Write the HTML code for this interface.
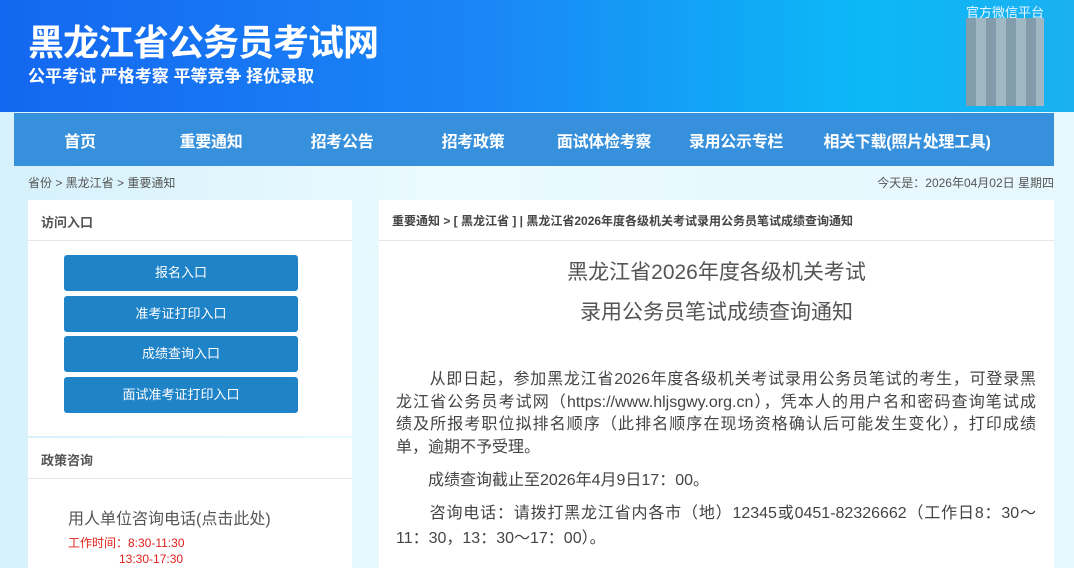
<!DOCTYPE html>
<html><head><meta charset="utf-8"><style>
*{margin:0;padding:0;box-sizing:border-box}
body{width:1074px;height:568px;overflow:hidden;background:linear-gradient(90deg,#d6f1fb,#eafaff 40%,#e6f8fe);font-family:"Liberation Sans","Noto Sans CJK SC",sans-serif;position:relative}
.hd{position:absolute;left:0;top:0;width:1074px;height:112px;background:linear-gradient(90deg,#1467f0 0%,#1a86f6 45%,#0cb8f6 80%,#1ab0f0 100%)}
.t1{position:absolute;left:28px;top:14px;color:#fff;font-size:36px;font-weight:bold;letter-spacing:-1px}
.t2{position:absolute;left:28px;top:62px;color:#fff;font-size:17px;font-weight:bold}
.qr{position:absolute;left:966px;top:18px;width:78px;height:88px;background:repeating-linear-gradient(90deg,#8f9aa4 0 10px,#b0b8bf 10px 20px);opacity:.9}
.qrt{position:absolute;left:966px;top:2px;color:#e8f4ff;font-size:13px}
.nav{position:absolute;left:14px;top:113px;width:1040px;height:53px;background:#3790dc;display:flex;align-items:center}
.nav span{color:#fff;font-size:16px;font-weight:bold;text-align:center;white-space:nowrap;letter-spacing:-0.3px}
.bc{position:absolute;top:174px;font-size:12px;color:#555}
.panel{position:absolute;background:#fff}
.ph{height:41px;border-bottom:1px solid #e6e6e6;font-size:13px;font-weight:bold;color:#555;padding:12px 0 0 13px}
.btn{position:absolute;left:36px;width:234px;height:36px;background:#1f83c8;border-radius:3px;color:#fff;font-size:13px;text-align:center;padding-top:7px}
.ct{font-size:21px;color:#555;text-align:center;position:absolute;width:100%}
.p{position:absolute;left:17px;width:640px;font-size:16px;color:#444;line-height:22.7px}
.p div{text-align:justify;text-align-last:justify}
.p div.l{text-align-last:left}
</style></head><body>
<div class="hd">
<div class="t1">黑龙江省公务员考试网</div>
<div class="t2">公平考试 严格考察 平等竞争 择优录取</div>
<div class="qrt">官方微信平台</div>
<div class="qr"></div>
</div>
<div class="nav">
<span style="width:132px">首页</span><span style="width:130px">重要通知</span><span style="width:132px">招考公告</span><span style="width:130px">招考政策</span><span style="width:132px">面试体检考察</span><span style="width:132px">录用公示专栏</span><span style="width:210px">相关下载(照片处理工具)</span>
</div>
<div class="bc" style="left:28px">省份 &gt; 黑龙江省 &gt; 重要通知</div>
<div class="bc" style="right:20px">今天是：2026年04月02日 星期四</div>

<div class="panel" style="left:28px;top:200px;width:324px;height:236px">
<div class="ph">访问入口</div>
<div class="btn" style="top:55px">报名入口</div>
<div class="btn" style="top:96px">准考证打印入口</div>
<div class="btn" style="top:136px">成绩查询入口</div>
<div class="btn" style="top:177px">面试准考证打印入口</div>
</div>
<div class="panel" style="left:28px;top:438px;width:324px;height:130px">
<div class="ph">政策咨询</div>
<div style="position:absolute;left:40px;top:67px;font-size:16px;color:#555">用人单位咨询电话(点击此处)</div>
<div style="position:absolute;left:40px;top:97px;font-size:12px;color:#e0201a;line-height:16px">工作时间：8:30-11:30<br><span style="padding-left:51px">13:30-17:30</span></div>
</div>

<div class="panel" style="left:379px;top:200px;width:675px;height:368px">
<div class="ph" style="font-size:12px;color:#444">重要通知 &gt; [ 黑龙江省 ] | 黑龙江省2026年度各级机关考试录用公务员笔试成绩查询通知</div>
<div class="ct" style="top:56px">黑龙江省2026年度各级机关考试</div>
<div class="ct" style="top:96px">录用公务员笔试成绩查询通知</div>
<div class="p" style="top:169px"><div>　　从即日起，参加黑龙江省2026年度各级机关考试录用公务员笔试的考生，可登录黑</div><div>龙江省公务员考试网（https://www.hljsgwy.org.cn），凭本人的用户名和密码查询笔试成</div><div>绩及所报考职位拟排名顺序（此排名顺序在现场资格确认后可能发生变化），打印成绩</div><div class="l">单，逾期不予受理。</div></div>
<div class="p" style="top:270px"><div class="l">　　成绩查询截止至2026年4月9日17：00。</div></div>
<div class="p" style="top:301px;line-height:25px"><div>　　咨询电话：请拨打黑龙江省内各市（地）12345或0451-82326662（工作日8：30～</div><div class="l">11：30，13：30～17：00）。</div></div>
</div>
</body></html>
